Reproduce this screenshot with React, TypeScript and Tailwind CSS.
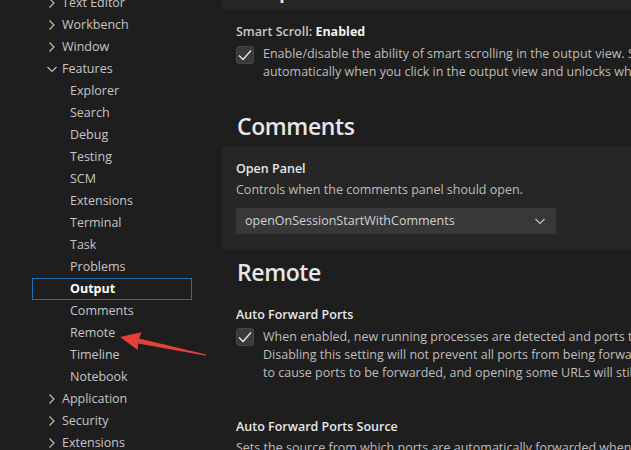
import React from "react";

type TocRow = {
  label: string;
  level: 1 | 2;
  open?: boolean;
  selected?: boolean;
};

const toc: TocRow[] = [
  { label: "Text Editor", level: 1 },
  { label: "Workbench", level: 1 },
  { label: "Window", level: 1 },
  { label: "Features", level: 1, open: true },
  { label: "Explorer", level: 2 },
  { label: "Search", level: 2 },
  { label: "Debug", level: 2 },
  { label: "Testing", level: 2 },
  { label: "SCM", level: 2 },
  { label: "Extensions", level: 2 },
  { label: "Terminal", level: 2 },
  { label: "Task", level: 2 },
  { label: "Problems", level: 2 },
  { label: "Output", level: 2, selected: true },
  { label: "Comments", level: 2 },
  { label: "Remote", level: 2 },
  { label: "Timeline", level: 2 },
  { label: "Notebook", level: 2 },
  { label: "Application", level: 1 },
  { label: "Security", level: 1 },
  { label: "Extensions", level: 1 },
];

const Chevron = ({ open }: { open?: boolean }) => (
  <svg width="16" height="16" viewBox="0 0 16 16" className="shrink-0">
    {open ? (
      <path d="M3.5 6 L8 10.5 L12.5 6" fill="none" stroke="#c5c5c5" strokeWidth="1.1" />
    ) : (
      <path d="M5.5 3.5 L10 8 L5.5 12.5" fill="none" stroke="#c5c5c5" strokeWidth="1.1" />
    )}
  </svg>
);

const Checkbox = () => (
  <div className="w-[18px] h-[18px] shrink-0 rounded-[3px] bg-[#3a3a3a] border border-[#474747] flex items-center justify-center">
    <svg width="16" height="16" viewBox="0 0 16 16">
      <path d="M2 8.5 L6 12.5 L14 3.5" fill="none" stroke="#ececec" strokeWidth="1.3" />
    </svg>
  </div>
);

const Heading = ({ children }: { children: React.ReactNode }) => (
  <div className="pl-[15px] h-[36px] leading-[36px] text-[23px] tracking-[-0.4px] font-semibold text-[#e7e7e7] whitespace-nowrap">
    {children}
  </div>
);

const Lines = ({ lines }: { lines: string[] }) => (
  <div className="text-[12.5px] leading-[18px] text-[#bdbdbd] whitespace-nowrap">
    {lines.map((l) => (
      <div key={l}>{l}</div>
    ))}
  </div>
);

export default function App() {
  return (
    <div
      className="relative w-[631px] h-[450px] overflow-hidden bg-[#1e1e1e] flex"
      style={{ fontFamily: '"Open Sans", "Noto Sans", sans-serif' }}
    >
      {/* table of contents */}
      <div className="w-[222px] shrink-0 pl-[32px]">
        <div className="mt-[-8px] w-[160px] text-[12.5px] text-[#c5c5c5]">
          {toc.map((r, i) => (
            <div
              key={i}
              className={
                "h-[22px] flex items-center whitespace-nowrap " +
                (r.selected ? "border border-[#1f6fb5] text-white font-bold " : "border border-transparent ") +
                (r.level === 1 ? "pl-[11px] gap-[2px]" : "pl-[37px]")
              }
            >
              {r.level === 1 && <Chevron open={r.open} />}
              <span>{r.label}</span>
            </div>
          ))}
        </div>
      </div>

      {/* settings list */}
      <div className="w-[900px] shrink-0">
        <div className="h-[10px] bg-[#262627] overflow-hidden">
          <div className="pl-[15px] mt-[-30px] text-[23px] leading-[36px] font-semibold text-[#e7e7e7]">Output</div>
        </div>

        {/* smart scroll */}
        <div className="pl-[14px] pt-[13px]">
          <div className="text-[12.5px] leading-[18px] whitespace-nowrap">
            <span className="text-[#c8c8c8] font-semibold">Smart Scroll: </span>
            <span className="text-[#f0f0f0] font-bold">Enabled</span>
          </div>
          <div className="mt-[4px] flex items-start gap-[9px]">
            <div className="mt-[1px]">
              <Checkbox />
            </div>
            <Lines
              lines={[
                "Enable/disable the ability of smart scrolling in the output view. Smart scrolling allows you to lock scrolling",
                "automatically when you click in the output view and unlocks when you click in the last line.",
              ]}
            />
          </div>
        </div>

        <div className="mt-[27px]">
          <Heading>Comments</Heading>
        </div>

        {/* open panel */}
        <div className="mt-[3px] bg-[#262627] pl-[14px] pt-[13px] pb-[16px]">
          <div className="text-[12.5px] leading-[18px] font-semibold text-[#e7e7e7]">Open Panel</div>
          <div className="mt-[3px]">
            <Lines lines={["Controls when the comments panel should open."]} />
          </div>
          <div className="mt-[9px] w-[320px] h-[26px] bg-[#383838] flex items-center justify-between pl-[9px] pr-[8px] text-[12.5px] text-[#d0d0d0]">
            <span>openOnSessionStartWithComments</span>
            <svg width="16" height="16" viewBox="0 0 16 16">
              <path d="M3.5 6 L8 10.5 L12.5 6" fill="none" stroke="#c5c5c5" strokeWidth="1.2" />
            </svg>
          </div>
        </div>

        <div className="mt-[4px]">
          <Heading>Remote</Heading>
        </div>

        {/* auto forward ports */}
        <div className="pl-[14px] mt-[16px]">
          <div className="text-[12.5px] leading-[18px] font-semibold text-[#e7e7e7]">Auto Forward Ports</div>
          <div className="mt-[4px] flex items-start gap-[9px]">
            <Checkbox />
            <Lines
              lines={[
                "When enabled, new running processes are detected and ports that they listen on are forwarded.",
                "Disabling this setting will not prevent all ports from being forwarded. Even when disabled, extensions will still be able",
                "to cause ports to be forwarded, and opening some URLs will still cause ports to forwarded.",
              ]}
            />
          </div>
        </div>

        <div className="pl-[14px] mt-[36px]">
          <div className="text-[12.5px] leading-[18px] font-semibold text-[#e7e7e7]">Auto Forward Ports Source</div>
          <div className="mt-[3px]">
            <Lines lines={["Sets the source from which ports are automatically forwarded when Auto Forward Ports is enabled."]} />
          </div>
        </div>
      </div>

      {/* red annotation arrow */}
      <svg className="absolute inset-0 pointer-events-none" width="631" height="450">
        <polygon
          points="120,337 141.4,332.3 139,338.6 206.1,354.4 205.9,355.8 138,343.6 137.8,349.9"
          fill="#e5403a"
        />
      </svg>
    </div>
  );
}
